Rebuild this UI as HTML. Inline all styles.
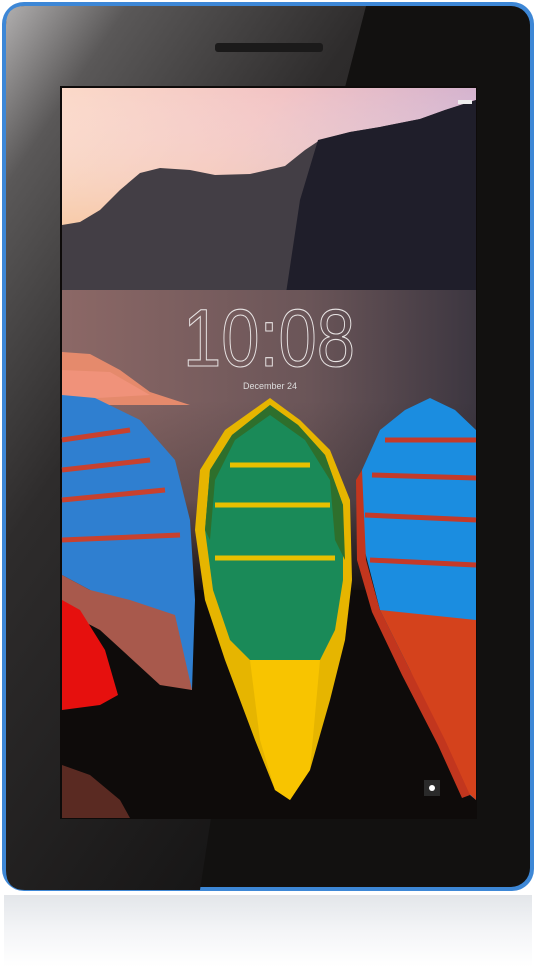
<!DOCTYPE html><html><head><style>
html,body{margin:0;padding:0;background:#fff;width:536px;height:967px;overflow:hidden}
</style></head><body>
<svg width="536" height="967" viewBox="0 0 536 967" xmlns="http://www.w3.org/2000/svg" style="display:block">
<defs>
<linearGradient id="refl" x1="0" y1="0" x2="0" y2="1"><stop offset="0" stop-color="#e3e6ea"/><stop offset="0.5" stop-color="#f4f5f7"/><stop offset="1" stop-color="#fff"/></linearGradient>
<linearGradient id="sky" x1="0" y1="0" x2="1" y2="0.3"><stop offset="0" stop-color="#fbd9c8"/><stop offset="0.5" stop-color="#f2c3c4"/><stop offset="1" stop-color="#cfb0d0"/></linearGradient>
<linearGradient id="skyv" x1="0" y1="0" x2="0" y2="1"><stop offset="0" stop-color="#fff" stop-opacity="0"/><stop offset="1" stop-color="#f9c993" stop-opacity="0.6"/></linearGradient>
<linearGradient id="lake" x1="0" y1="0" x2="1" y2="0"><stop offset="0" stop-color="#8c6866"/><stop offset="0.6" stop-color="#6a5558"/><stop offset="1" stop-color="#3c3640"/></linearGradient>
<linearGradient id="lakev" x1="0" y1="0" x2="0" y2="1"><stop offset="0" stop-color="#0e0b0a" stop-opacity="0"/><stop offset="0.5" stop-color="#0e0b0a" stop-opacity="0.2"/><stop offset="1" stop-color="#0e0b0a" stop-opacity="1"/></linearGradient>
<linearGradient id="gloss" x1="0" y1="0" x2="0.6" y2="1"><stop offset="0" stop-color="#b0aeae"/><stop offset="0.15" stop-color="#5a5858"/><stop offset="0.45" stop-color="#2e2c2c"/><stop offset="1" stop-color="#161515"/></linearGradient>
</defs>
<rect x="4" y="895" width="528" height="72" fill="url(#refl)"/>
<rect x="2" y="2" width="532" height="889" rx="22" fill="#3d87d6"/>
<rect x="6" y="6" width="524" height="881" rx="19" fill="#121110"/>
<path d="M25 6 H366 L290 300 L200 890 H25 Q6 890 6 870 V25 Q6 6 25 6Z" fill="url(#gloss)"/>
<rect x="215" y="43" width="108" height="9" rx="3" fill="#1b1a1a"/>
<rect x="60" y="86" width="417" height="733" fill="#0e0b0a"/>
<rect x="62" y="88" width="414" height="140" fill="url(#sky)"/>
<rect x="62" y="88" width="414" height="140" fill="url(#skyv)"/>
<path d="M62 225 L80 222 L100 210 L120 190 L140 173 L160 168 L190 170 L215 175 L250 174 L285 166 L305 150 L320 140 L350 132 L380 127 L420 119 L445 110 L476 100 V300 H62Z" fill="#433e45"/>
<path d="M318 140 L350 132 L380 127 L420 119 L445 110 L476 100 V300 H285 L300 200Z" fill="#1f1e2a"/>
<rect x="62" y="290" width="414" height="300" fill="url(#lake)"/>
<rect x="62" y="400" width="414" height="200" fill="url(#lakev)"/>
<path d="M62 352 L90 354 L120 370 L150 392 L190 405 L62 405Z" fill="#e58a6c"/>
<path d="M62 370 L110 372 L150 395 L62 400Z" fill="#f0927a"/>
<path d="M62 395 L95 398 L140 420 L175 460 L190 520 L195 600 L192 690 L160 680 L120 620 L90 590 L62 575Z" fill="#2f7fd0"/>
<g stroke="#c8412e" stroke-width="5"><line x1="62" y1="440" x2="130" y2="430"/><line x1="62" y1="470" x2="150" y2="460"/><line x1="62" y1="500" x2="165" y2="490"/><line x1="62" y1="540" x2="180" y2="535"/></g>
<path d="M62 575 L90 590 L130 600 L175 615 L192 690 L160 685 L100 630 L62 610Z" fill="#a8594c"/>
<path d="M62 600 L80 610 L105 650 L118 695 L100 705 L62 710Z" fill="#e6100e"/>
<path d="M270 398 L300 420 L330 450 L350 500 L352 580 L345 640 L330 700 L310 770 L290 800 L275 790 L255 740 L225 660 L205 600 L195 530 L200 470 L225 430Z" fill="#e6b500"/>
<path d="M270 405 L298 425 L325 455 L343 505 L343 580 L335 630 L320 660 L250 660 L230 640 L213 590 L205 530 L210 470 L232 435Z" fill="#1a8a58"/>
<path d="M270 405 L298 425 L325 455 L343 505 L345 560 L335 540 L330 480 L305 440 L270 415 L235 440 L215 480 L210 540 L205 530 L210 470 L232 435Z" fill="#2e6f2c"/>
<g stroke="#e8c000" stroke-width="5"><line x1="230" y1="465" x2="310" y2="465"/><line x1="215" y1="505" x2="330" y2="505"/><line x1="215" y1="558" x2="335" y2="558"/></g>
<path d="M250 660 L320 660 L310 770 L290 800 L275 790 L260 740Z" fill="#f8c400"/>
<path d="M430 398 L455 410 L476 430 V800 L470 795 L445 740 L410 670 L380 610 L362 540 L362 470 L380 430 L405 410Z" fill="#1b8de0"/>
<g stroke="#c43a2a" stroke-width="5"><line x1="385" y1="440" x2="476" y2="440"/><line x1="372" y1="475" x2="476" y2="478"/><line x1="365" y1="515" x2="476" y2="520"/><line x1="370" y1="560" x2="476" y2="565"/></g>
<path d="M380 610 L476 620 V800 L465 790 L440 740 L410 670Z" fill="#d4421c"/>
<path d="M362 470 L366 560 L380 610 L410 670 L445 740 L470 795 L462 798 L438 745 L402 675 L372 612 L357 560 L356 480Z" fill="#c2361e"/>
<path d="M62 765 L90 775 L120 800 L130 818 L62 818Z" fill="#5a2a22"/>
<rect x="458" y="100" width="14" height="4" fill="#eee"/>
<rect x="424" y="780" width="16" height="16" fill="#2a2a2a"/><circle cx="432" cy="788" r="3" fill="#fff"/>
<text x="183" y="366" textLength="172" lengthAdjust="spacingAndGlyphs" font-family="Liberation Sans, sans-serif" font-size="82" fill="none" stroke="#e8e4e4" stroke-width="1.1">10:08</text>
<text x="270" y="389" text-anchor="middle" font-family="Liberation Sans, sans-serif" font-size="9" fill="#ddd">December 24</text>
</svg>
</body></html>
